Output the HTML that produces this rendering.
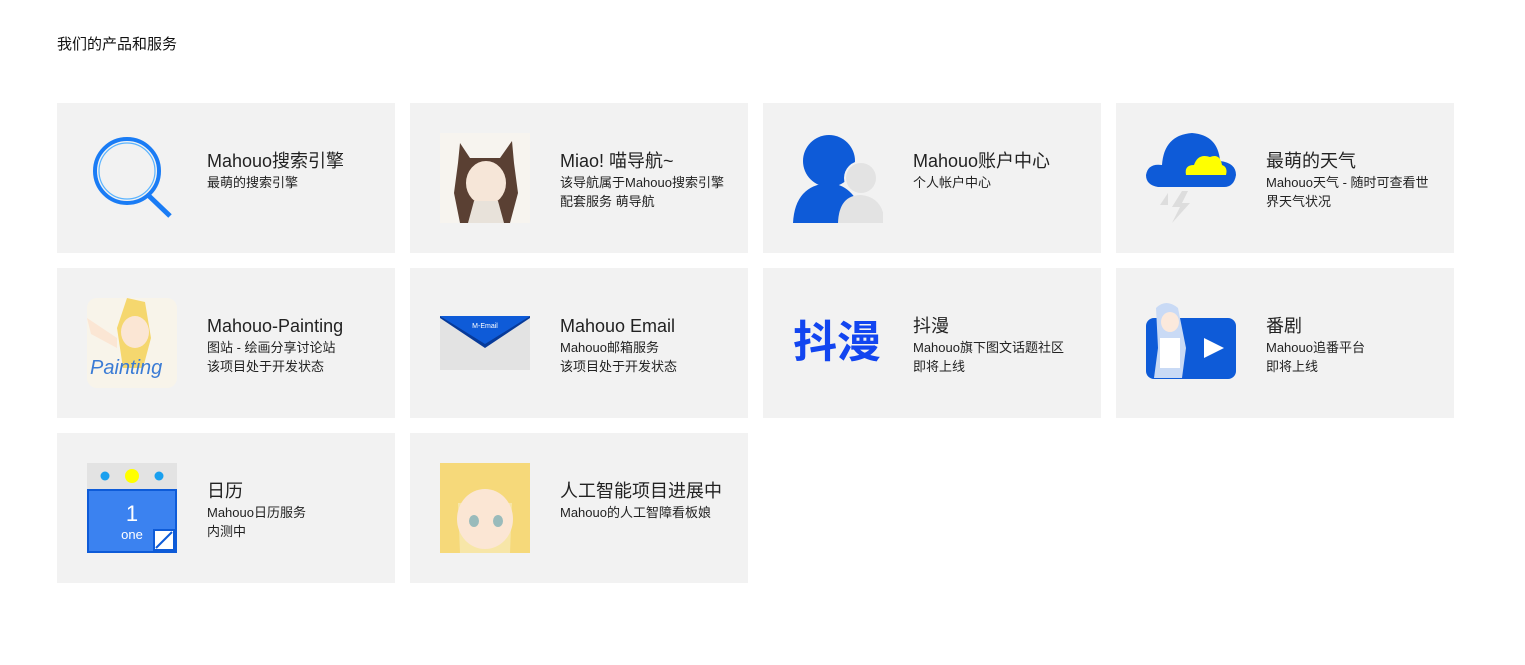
<!DOCTYPE html>
<html><head><meta charset="utf-8"><style>
*{margin:0;padding:0;box-sizing:border-box}
body{width:1525px;height:665px;background:#fff;font-family:"Liberation Sans","Noto Sans CJK SC",sans-serif;color:#111;position:relative;overflow:hidden}
h1{position:absolute;left:57px;top:33px;font-size:15px;font-weight:normal}
.c{position:absolute;width:338px;height:150px;background:#f2f2f2}
.i{position:absolute;left:30px;top:30px;width:90px;height:90px;overflow:hidden}
.t{position:absolute;left:150px;top:46px;width:172px}
.t b{display:block;font-weight:normal;font-size:18px;line-height:24px;color:#222}
.t p{font-size:13px;line-height:19px;color:#222}
</style></head><body>
<h1>我们的产品和服务</h1>

<div class="c" style="left:57px;top:103px"><div class="i"><svg width="90" height="90"><circle cx="40" cy="38" r="32" fill="none" stroke="#1a7cf5" stroke-width="4"/><circle cx="40" cy="38" r="28" fill="none" stroke="#5bb4ff" stroke-width="1.2"/><line x1="61" y1="62" x2="83" y2="83" stroke="#1a7cf5" stroke-width="5"/></svg></div><div class="t"><b>Mahouo搜索引擎</b><p>最萌的搜索引擎</p></div></div>

<div class="c" style="left:410px;top:103px"><div class="i" style="background:#f7f4ef"><svg width="90" height="90"><path d="M20 10 L30 25 L60 25 L72 8 L74 30 L78 60 L70 90 L20 90 L14 60 L18 30Z" fill="#5a4033"/><ellipse cx="46" cy="50" rx="20" ry="22" fill="#f6e6d8"/><path d="M28 90 L34 68 L58 68 L64 90Z" fill="#e8e2da"/></svg></div><div class="t"><b>Miao! 喵导航~</b><p>该导航属于Mahouo搜索引擎配套服务 萌导航</p></div></div>

<div class="c" style="left:763px;top:103px"><div class="i"><svg width="90" height="90"><circle cx="36" cy="28" r="26" fill="#0e5bd8"/><path d="M0 90 Q2 52 36 50 Q64 52 72 90Z" fill="#0e5bd8"/><circle cx="68" cy="45" r="17" fill="#f2f2f2"/><circle cx="68" cy="45" r="15" fill="#e3e3e3"/><path d="M45 90 Q46 62 68 62 Q90 64 92 90Z" fill="#e3e3e3"/></svg></div><div class="t"><b>Mahouo账户中心</b><p>个人帐户中心</p></div></div>

<div class="c" style="left:1116px;top:103px"><div class="i"><svg width="90" height="90"><path d="M12 54 Q0 52 0 42 Q2 30 16 32 Q18 2 46 0 Q72 2 74 28 Q90 30 90 42 Q88 54 78 54Z" fill="#0e5bd8"/><path d="M40 42 Q38 32 48 32 Q52 20 64 24 Q74 20 76 32 Q82 34 80 42Z" fill="#ffff00"/><path d="M36 58 L26 74 L34 74 L26 90 L44 70 L36 70 L42 58Z" fill="#ddd"/><path d="M22 60 L14 72 L22 72Z" fill="#ddd"/></svg></div><div class="t"><b>最萌的天气</b><p>Mahouo天气 - 随时可查看世界天气状况</p></div></div>

<div class="c" style="left:57px;top:268px"><div class="i" style="background:#f8f4ea;border-radius:10px"><svg width="90" height="90"><path d="M40 0 L58 4 L64 40 L56 70 L36 70 L30 30Z" fill="#f5d76e"/><ellipse cx="48" cy="34" rx="14" ry="16" fill="#fbe6d4"/><path d="M0 20 L30 40 L30 50 L4 36Z" fill="#fbe6d4"/><text x="3" y="76" font-family="Liberation Sans" font-style="italic" font-size="20" fill="#3a7bd5">Painting</text></svg></div><div class="t"><b>Mahouo-Painting</b><p>图站 - 绘画分享讨论站<br>该项目处于开发状态</p></div></div>

<div class="c" style="left:410px;top:268px"><div class="i"><svg width="90" height="90"><rect x="0" y="18" width="90" height="54" fill="#e3e3e3"/><path d="M0 18 L90 18 L45 48Z" fill="#0e5bd8"/><path d="M0 18 L45 46 L90 18 L90 20 L45 50 L0 20Z" fill="#073a99"/><text x="45" y="30" text-anchor="middle" font-size="7" fill="#fff" font-family="Liberation Sans">M-Email</text></svg></div><div class="t"><b>Mahouo Email</b><p>Mahouo邮箱服务<br>该项目处于开发状态</p></div></div>

<div class="c" style="left:763px;top:268px"><div class="i"><div style="position:absolute;left:0;top:20px;font-size:44px;font-weight:bold;color:#1245f0;line-height:50px;width:100px">抖漫</div></div><div class="t"><b>抖漫</b><p>Mahouo旗下图文话题社区<br>即将上线</p></div></div>

<div class="c" style="left:1116px;top:268px"><div class="i"><svg width="90" height="90"><rect x="0" y="20" width="90" height="61" rx="8" fill="#0e5bd8"/><path d="M58 40 L78 50 L58 60Z" fill="#fff"/><path d="M10 10 Q20 0 32 10 L40 50 L36 80 L8 80 L12 50Z" fill="#c9daf5"/><ellipse cx="24" cy="24" rx="9" ry="10" fill="#fbe9dc"/><rect x="14" y="40" width="20" height="30" fill="#fff"/></svg></div><div class="t"><b>番剧</b><p>Mahouo追番平台<br>即将上线</p></div></div>

<div class="c" style="left:57px;top:433px"><div class="i"><svg width="90" height="90"><rect x="0" y="0" width="90" height="26" fill="#e3e3e3"/><circle cx="18" cy="13" r="4.5" fill="#1aa0ef"/><circle cx="45" cy="13" r="7" fill="#ffff00"/><circle cx="72" cy="13" r="4.5" fill="#1aa0ef"/><rect x="1" y="27" width="88" height="62" fill="#3b82f0" stroke="#0e5bd8" stroke-width="2"/><text x="45" y="58" text-anchor="middle" font-size="22" fill="#fff" font-family="Liberation Sans">1</text><text x="45" y="76" text-anchor="middle" font-size="13" fill="#fff" font-family="Liberation Sans">one</text><rect x="67" y="67" width="20" height="20" fill="#fff" stroke="#0e5bd8" stroke-width="2"/><line x1="69" y1="85" x2="85" y2="69" stroke="#0e5bd8" stroke-width="2"/></svg></div><div class="t"><b>日历</b><p>Mahouo日历服务<br>内测中</p></div></div>

<div class="c" style="left:410px;top:433px"><div class="i" style="background:#f7e6a8"><svg width="90" height="90"><path d="M0 0 L90 0 L90 90 L70 90 L72 40 L18 40 L20 90 L0 90Z" fill="#f6d97a"/><ellipse cx="45" cy="56" rx="28" ry="30" fill="#fbe6d4"/><ellipse cx="34" cy="58" rx="5" ry="6" fill="#9bb"/><ellipse cx="58" cy="58" rx="5" ry="6" fill="#9bb"/></svg></div><div class="t" style="width:190px"><b>人工智能项目进展中</b><p>Mahouo的人工智障看板娘</p></div></div>
</body></html>
